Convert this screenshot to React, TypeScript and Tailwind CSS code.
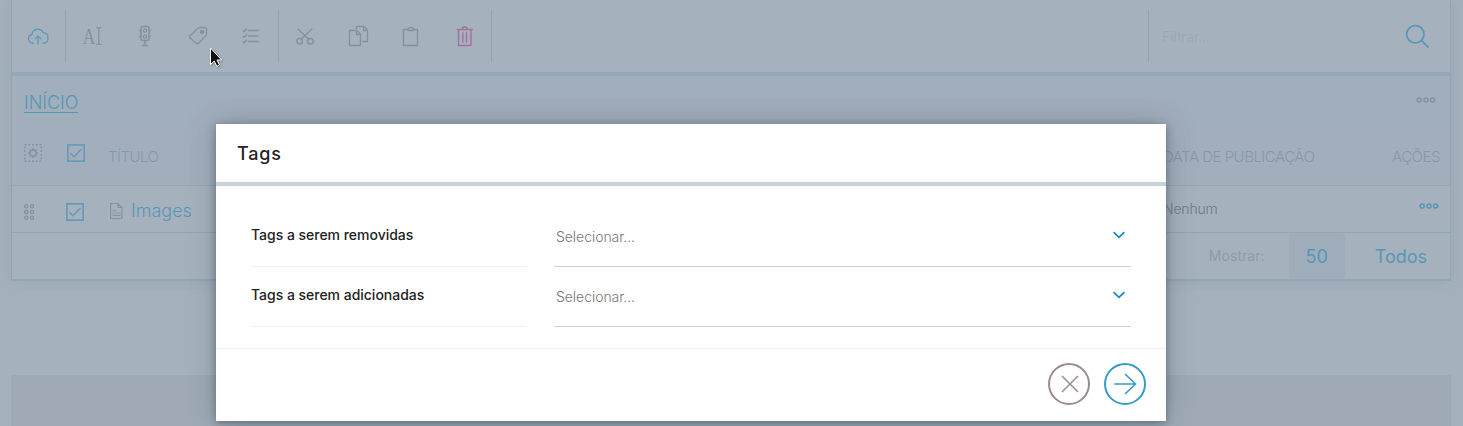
import type { ReactNode } from 'react';

const inter = 'font-[Inter,sans-serif]';

function Icon({ children, className = 'text-[#8491a0]' }: { children: ReactNode; className?: string }) {
  return (
    <div className={`h-6 w-[53px] shrink-0 pl-3.5 ${className}`}>
      <svg width="25" height="25" viewBox="0 0 25 25" fill="none" stroke="currentColor" strokeWidth="1.3" strokeLinejoin="round" className="block">
        {children}
      </svg>
    </div>
  );
}

function Divider() {
  return <div className="h-[52px] w-px shrink-0 bg-[#93a4b2]" />;
}

function Checkbox() {
  return (
    <svg width="18" height="18" viewBox="0 0 18 18" fill="none" stroke="#669bb9" className="block shrink-0">
      <rect x=".85" y=".85" width="16.3" height="16.3" strokeWidth="1.7" />
      <path d="M3.5 9.2 7 12.7 14.5 5" strokeWidth="1.4" />
    </svg>
  );
}

function Dots({ className }: { className: string }) {
  return (
    <svg width="20" height="6" viewBox="0 0 20 6" fill="none" stroke="currentColor" strokeWidth="1.5" className={`block shrink-0 ${className}`}>
      <circle cx="3.2" cy="3" r="2.05" />
      <circle cx="10" cy="3" r="2.05" />
      <circle cx="16.6" cy="3" r="2.05" />
    </svg>
  );
}

function Toolbar() {
  return (
    <div className="flex h-[76px] border-b-4 border-[#95a6b4] pt-2.5">
      <div className="flex h-[52px] w-full items-center">
        <Icon className="text-[#609bba]">
          <path d="M8.2 19.2H7a4.6 4.6 0 0 1-.8-9.1C6 7 8.8 5.2 11.8 5.2c2.7 0 4.5 1.5 5.3 3.5 3.3-.1 5 2.4 4.6 4.2 1.2 3-.8 6.3-4 6.3h-1.200M4 12.200c.4-1 1.200-1.600 2.200-1.800M12 20.500V12M8.700 15.200 12 12l3.300 3.200" strokeWidth="1.4" />
        </Icon>
        <Divider />
        <Icon>
          <text x="2.8" y="20" fontFamily="Liberation Serif, serif" fontSize="24" fill="currentColor" stroke="none" textLength="12.500" lengthAdjust="spacingAndGlyphs">A</text>
          <path d="M16.300 3.700h1.500l1 .8 1-.8h1.500M18.800 4.500v15M16.300 20.400h1.500l1-.8 1 .8h1.500" />
        </Icon>
        <Icon>
          <rect x="8" y="2.500" width="8" height="14" rx="1.500" strokeWidth="1.500" />
          <circle cx="12" cy="6.500" r="1.600" /><circle cx="12" cy="12.500" r="1.600" />
          <path d="M6 6.500h2M6 12.500h2M16 6.500h2M16 12.500h2M12 16.500v5M9 21.500h6" strokeWidth="1.500" />
        </Icon>
        <Icon>
          <path d="m3.600 12.300 8.400-8.100 1.300-.7h6l1.200 1.200v6l-.8 1.300-7.700 7.700-1.300.1-7-6.200z" />
          <circle cx="16" cy="8" r="1.500" fill="currentColor" />
        </Icon>
        <Icon>
          <path d="M9 6.500h10.500M9 12h10.500M9 17.500h10.500" strokeWidth="1.500" />
          <path d="m4 6.500 1.200 1.200 2.700-3M4 12l1.200 1.200 2.700-3M4 17.500l1.200 1.200 2.700-3" strokeWidth="1.500" />
        </Icon>
        <Divider />
        <Icon>
          <circle cx="6.600" cy="17.300" r="2.800" strokeWidth="1.400" /><circle cx="17.400" cy="17.300" r="2.800" strokeWidth="1.400" />
          <path d="M4.500 4.500 15.500 15M19.300 4.500 8.400 15" />
        </Icon>
        <Icon>
          <path d="M3.500 6.500h7.500l3.500 3.500v11.500h-11zM10.500 6.500v4h4M10.500 5V2.500h7.500l3.500 3.500v11.500h-5M17.500 2.500v4h4" />
        </Icon>
        <Icon>
          <path d="M8.500 5.500h-4v16h14v-16h-4M9 6.500V4.300h1.200a1.700 1.700 0 0 1 3.200 0h1.100v2.200z" strokeWidth="1.400" />
        </Icon>
        <Icon className="text-[#a5709f]">
          <path d="M6.500 5.500v16h12.500v-16M4.700 5.500h16M10.300 5.300a2.300 2.300 0 0 1 5 0M10.800 8.300v10.500M14.500 8.300v10.500" strokeWidth="1.400" />
        </Icon>
        <Divider />
        <div className="grow" />
        <Divider />
        <div className="flex w-[301px] items-center justify-between pr-5 pl-[13px] text-[14px] font-light text-[#98a8b6]">
          <span>Filtrar...</span>
          <svg width="26" height="26" viewBox="0 0 26 26" fill="none" stroke="#5896b8" strokeWidth="1.700">
            <circle cx="11.300" cy="11.300" r="8.700" /><path d="m17.600 17.600 6.900 6.900" />
          </svg>
        </div>
      </div>
    </div>
  );
}

function FileList() {
  return (
    <section className={`${inter} h-[281px] border-x border-b-2 border-[#94a5b3] bg-[#a5b2bd] shadow-[0_0_14px_rgba(110,135,155,0.3)]`}>
      <Toolbar />
      <div className="flex h-[52px] items-start justify-between bg-[#a1aebc] pl-3 pr-3.5">
        <a className="mt-[18px] h-[19px] border-b border-[#5896b5] text-[18px] leading-[17px] font-light tracking-[-.05px] text-[#5896b5]">INÍCIO</a>
        <Dots className="mt-[21px] text-[#8393a1]" />
      </div>
      <div className="flex h-[58px] border-b border-[#97a7b4] bg-[#a2aebb] pl-3 text-[15px] leading-5 font-light tracking-[-.5px] text-[#8799a7]">
        <svg width="18" height="18" viewBox="0 0 18 18" fill="none" stroke="#8293a1" className="mt-4 shrink-0">
          <rect x=".75" y=".75" width="16.500" height="16.500" strokeDasharray="1.800 1.867" strokeWidth="1.500" />
          <circle cx="9" cy="9" r="3" strokeWidth="1.400" />
          <path d="M9 4v2M9 12v2M4 9h2M12 9h2M5.500 5.500l1.400 1.400M11.100 11.100l1.400 1.400M12.500 5.500l-1.400 1.400M6.900 11.100l-1.400 1.400" strokeWidth="1.400" />
        </svg>
        <div className="mt-4 ml-[25px]"><Checkbox /></div>
        <span className="mt-[19px] ml-[23px]">TÍTULO</span>
        <span className="mt-[19px] ml-auto w-[229px]">DATA DE PUBLICAÇÃO</span>
        <span className="mt-[19px] w-[58px]">AÇÕES</span>
      </div>
      <div className="flex h-[47px] border-b border-[#93a5b2] pl-3">
        <svg width="11" height="17" viewBox="0 0 11 17" fill="none" stroke="#8293a1" strokeWidth="1.300" className="mt-[18px] shrink-0">
          <circle cx="2.200" cy="2.300" r="1.600" /><circle cx="8" cy="2.300" r="1.600" />
          <circle cx="2.200" cy="8" r="1.600" /><circle cx="8" cy="8" r="1.600" />
          <circle cx="2.200" cy="13.700" r="1.600" /><circle cx="8" cy="13.700" r="1.600" />
        </svg>
        <div className="mt-[17px] ml-[31px]"><Checkbox /></div>
        <svg width="13" height="18" viewBox="0 0 13 18" fill="none" stroke="#8293a1" strokeWidth="1.200" className="mt-4 ml-[26px] shrink-0">
          <path d="M.6 1.500h7.400l3.900 4v11H.6zM8 1.500v4h3.900M2.500 11h8M2.500 13.500h8M2.500 8.500h4" />
        </svg>
        <a className="mt-[13px] ml-2 text-[18px] leading-6 font-light text-[#5896b8]">Images</a>
        <span className="mt-[13px] ml-auto w-[256px] text-[14px] leading-5 font-light tracking-[-.2px] text-[#6b7a86]">Nenhum</span>
        <Dots className="mt-[17px] mr-[11px] text-[#5896b8]" />
      </div>
      <div className="flex h-[46px] items-center justify-end">
        <span className="mr-6 pb-0.5 text-[14px] tracking-[.05px] text-[#8c9cac]">Mostrar:</span>
        <span className="flex h-full w-14 items-center justify-center rounded bg-[#9fadbb] text-[18px] text-[#5896b8]">50</span>
        <span className="mr-[23px] ml-[30px] text-[18px] text-[#5896b8]">Todos</span>
      </div>
    </section>
  );
}

function Field({ label }: { label: string }) {
  return (
    <div className="flex h-[60px] gap-7">
      <div className="w-[275px] border-b border-[#eee] pt-[18px] text-[14px] leading-5 font-medium tracking-[-.02px] text-[#222]">{label}</div>
      <div className="flex w-[577px] justify-between border-b border-[#c4d4d8] pt-5 pr-1.5 pl-0.5 text-[14px] leading-5 font-light tracking-[-.05px] text-[#777]">
        <span>Selecionar...</span>
        <svg width="12" height="8" viewBox="0 0 12 8" fill="none" stroke="#1683c1" strokeWidth="1.600" className="mt-1">
          <path d="m.6 1.200 5.400 5.200 5.400-5.200" />
        </svg>
      </div>
    </div>
  );
}

function TagsDialog() {
  return (
    <div role="dialog" className={`${inter} absolute top-[124px] left-[216px] flex h-[297px] w-[950px] flex-col bg-white shadow-[0_2px_8px_rgba(35,45,55,0.4),0_0_28px_rgba(50,65,85,0.28)]`}>
      <header className="h-[62px] border-b-4 border-[#c6d3d8] pt-[18px] pl-[21px] text-[18px] leading-[24px] font-medium tracking-[.8px] text-[#222]">Tags</header>
      <div className="h-[163px] border-b border-[#eee] px-[35px] pt-[21px]">
        <Field label="Tags a serem removidas" />
        <Field label="Tags a serem adicionadas" />
      </div>
      <footer className="flex justify-end gap-3.5 pt-3.5 pr-5">
        <svg width="42" height="42" viewBox="0 0 42 42" fill="none" stroke="#9b8b8b" strokeWidth="2">
          <circle cx="21" cy="21" r="20" /><path d="m14 13 16 16M30 13 14 29" strokeWidth="1.500" />
        </svg>
        <svg width="42" height="42" viewBox="0 0 42 42" fill="none" stroke="#359cc6" strokeWidth="2">
          <circle cx="21" cy="21" r="20" /><path d="M10.300 21h21.200M21 11l10.500 10L21 31" strokeWidth="1.600" />
        </svg>
      </footer>
    </div>
  );
}

export default function App() {
  return (
    <main className="relative h-[426px] w-[1463px] overflow-hidden bg-[#a5b2bd] pr-3 pl-[11px]">
      <FileList />
      <div className="mt-[94px] h-[51px] bg-[#9faab6]" />
      <TagsDialog />
      <svg width="15" height="22" viewBox="0 0 15 22" className="absolute top-[47px] left-[209px] drop-shadow-[1px_1px_1px_rgba(0,0,0,0.3)]">
        <path d="M1.500 1v16.500l3.700-3.500 2.600 5.300 2.700-1.300-2.500-5h4.700z" fill="#111" stroke="#fff" />
      </svg>
    </main>
  );
}
